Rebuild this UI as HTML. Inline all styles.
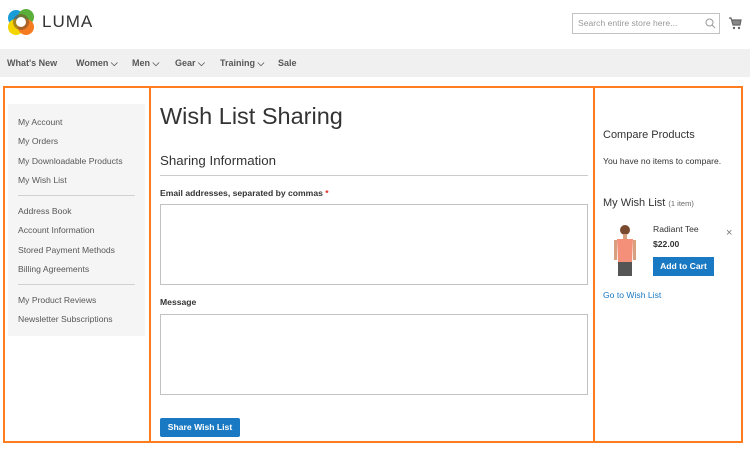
<!DOCTYPE html>
<html><head><meta charset="utf-8"><style>
*{margin:0;padding:0;box-sizing:border-box}
body{width:750px;height:450px;position:relative;background:#fff;font-family:"Liberation Sans",sans-serif;color:#333;overflow:hidden}
.a{position:absolute}
.nav{top:49px;left:0;width:750px;height:28px;background:#f0f0f0}
.nav span{position:absolute;top:9px;font-size:9px;font-weight:bold;color:#575757}
.side{left:8px;top:104px;width:137px;height:232px;background:#f5f5f5}
.side div{position:absolute;left:10px;font-size:8.6px;color:#575757}
.hr{position:absolute;left:10px;width:117px;height:1px;background:#d1d1d1}
.box{border:1px solid #c2c2c2;background:#fff}
</style></head><body>
<svg class="a" style="left:7px;top:9px" width="28" height="26" viewBox="0 0 28 26">
<circle cx="9" cy="9" r="8" fill="#1a9cd8"/><circle cx="19" cy="8" r="8" fill="#5aaf3a"/>
<circle cx="9" cy="18" r="8" fill="#f5d500"/><circle cx="19" cy="18" r="8" fill="#f47b20"/>
<circle cx="14" cy="13" r="8" fill="#7a5230" opacity=".6"/>
<circle cx="14" cy="13" r="5" fill="#fff"/></svg>
<div class="a" style="left:42px;top:12px;font-size:17px;letter-spacing:1px;color:#333">LUMA</div>
<div class="a box" style="left:572px;top:13px;width:148px;height:21px"></div>
<div class="a" style="left:578px;top:18px;font-size:8.6px;color:#999">Search entire store here...</div>
<svg class="a" style="left:705px;top:18px" width="11" height="11"><circle cx="4.5" cy="4.5" r="3.5" stroke="#999" fill="none"/><path d="M7 7l3 3" stroke="#999"/></svg>
<svg class="a" style="left:728px;top:16px" width="14" height="14"><path d="M1 2h2l2 7h7l1-5H4" stroke="#666" fill="#888" stroke-width="1.2"/><circle cx="6" cy="12" r="1.2" fill="#666"/><circle cx="11" cy="12" r="1.2" fill="#666"/></svg>
<div class="a nav">
<span style="left:7px">What's New</span><span style="left:76px">Women ⌵</span><span style="left:132px">Men ⌵</span><span style="left:175px">Gear ⌵</span><span style="left:220px">Training ⌵</span><span style="left:278px">Sale</span></div>
<div class="a" style="left:3px;top:86px;width:740px;height:357px;border:2px solid #ff7d1e"></div>
<div class="a" style="left:149px;top:86px;width:2px;height:357px;background:#ff7d1e"></div>
<div class="a" style="left:593px;top:86px;width:2px;height:357px;background:#ff7d1e"></div>
<div class="a side">
<div style="top:13px">My Account</div><div style="top:32px">My Orders</div><div style="top:52px">My Downloadable Products</div><div style="top:71px">My Wish List</div>
<div class="hr" style="top:91px"></div>
<div style="top:102px">Address Book</div><div style="top:121px">Account Information</div><div style="top:141px">Stored Payment Methods</div><div style="top:160px">Billing Agreements</div>
<div class="hr" style="top:180px"></div>
<div style="top:191px">My Product Reviews</div><div style="top:210px">Newsletter Subscriptions</div></div>
<div class="a" style="left:160px;top:103px;font-size:23.5px;font-weight:300;color:#333">Wish List Sharing</div>
<div class="a" style="left:160px;top:153px;font-size:13.3px;color:#333">Sharing Information</div>
<div class="a" style="left:160px;top:175px;width:428px;height:1px;background:#ccc"></div>
<div class="a" style="left:160px;top:188px;font-size:8.6px;font-weight:bold">Email addresses, separated by commas <span style="color:#e02b27">*</span></div>
<div class="a box" style="left:160px;top:204px;width:428px;height:81px"></div>
<div class="a" style="left:160px;top:297px;font-size:8.6px;font-weight:bold">Message</div>
<div class="a box" style="left:160px;top:314px;width:428px;height:81px"></div>
<div class="a" style="left:160px;top:418px;width:80px;height:19px;background:#1979c3;border-radius:2px;color:#fff;font-size:8.6px;font-weight:bold;text-align:center;line-height:19px">Share Wish List</div>
<div class="a" style="left:603px;top:129px;font-size:11px">Compare Products</div>
<div class="a" style="left:603px;top:156px;font-size:8.6px">You have no items to compare.</div>
<div class="a" style="left:603px;top:197px;font-size:11px">My Wish List <span style="font-size:7.5px;color:#666">(1 item)</span></div>
<svg class="a" style="left:612px;top:222px" width="26" height="56"><circle cx="13" cy="8" r="5" fill="#7a4a30"/><rect x="11" y="12" width="4" height="5" fill="#d9a080"/><path d="M5 17h16l-1 23H6z" fill="#f4907a"/><rect x="2" y="18" width="3" height="20" fill="#d9a080"/><rect x="21" y="18" width="3" height="20" fill="#d9a080"/><rect x="6" y="40" width="14" height="14" fill="#555"/></svg>
<div class="a" style="left:653px;top:224px;font-size:8.6px">Radiant Tee</div>
<div class="a" style="left:726px;top:227px;font-size:11px;color:#777">×</div>
<div class="a" style="left:653px;top:239px;font-size:8.6px;font-weight:bold">$22.00</div>
<div class="a" style="left:653px;top:257px;width:61px;height:19px;background:#1979c3;color:#fff;font-size:8.6px;font-weight:bold;text-align:center;line-height:19px">Add to Cart</div>
<div class="a" style="left:603px;top:290px;font-size:8.6px;color:#1979c3">Go to Wish List</div>
</body></html>
